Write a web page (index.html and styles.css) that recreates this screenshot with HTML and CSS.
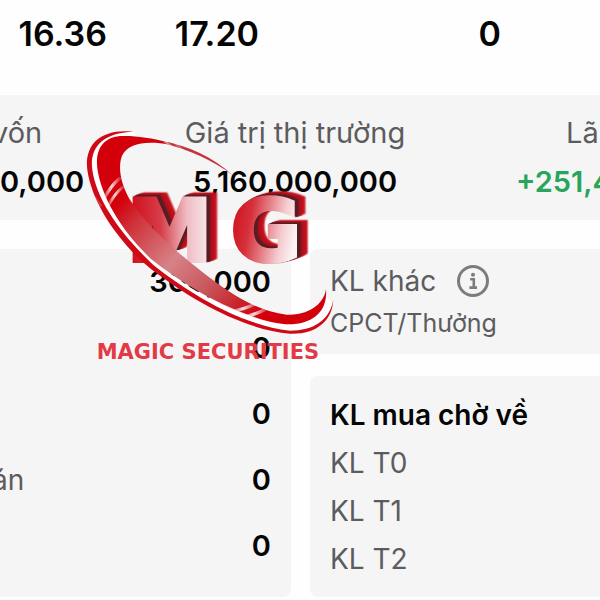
FILE: index.html
```html
<!DOCTYPE html>
<html lang="vi">
<head>
    <meta charset="UTF-8">
    <meta name="viewport" content="width=device-width, initial-scale=1.0">
    <title>Magic Securities</title>
    <link rel="stylesheet" href="styles.css">
</head>
<body>
    <main class="portfolio">
        <div class="prices">
            <span>16.36</span>
            <span>17.20</span>
            <span>0</span>
        </div>

        <dl class="summary">
            <div class="summary-item">
                <dt class="bleed">vốn</dt>
                <dd>0,000</dd>
            </div>
            <div class="summary-item center">
                <dt>Giá trị thị trường</dt>
                <dd>5,160,000,000</dd>
            </div>
            <div class="summary-item profit">
                <dt>Lã</dt>
                <dd>+251,4</dd>
            </div>
        </dl>

        <div class="details">
            <dl class="card volumes">
                <div class="row"><dt></dt><dd>300,000</dd></div>
                <div class="row"><dt></dt><dd>0</dd></div>
                <div class="row"><dt></dt><dd>0</dd></div>
                <div class="row"><dt class="bleed">án</dt><dd>0</dd></div>
                <div class="row"><dt></dt><dd>0</dd></div>
            </dl>

            <div class="column">
                <section class="card other">
                    <div class="other-title">
                        <span>KL khác</span>
                        <button class="info" type="button" aria-label="KL khác">
                            <svg viewBox="0 0 32 32" width="32" height="32">
                                <circle cx="16" cy="16" r="14.5" fill="none" stroke="#7c7c7e" stroke-width="3"/>
                                <circle cx="16" cy="9.7" r="2" fill="#7c7c7e"/>
                                <path d="M13.2 14.2h3.6v8M12.4 22.6h7.6" fill="none" stroke="#7c7c7e" stroke-width="2.6"/>
                            </svg>
                        </button>
                    </div>
                    <p class="note">CPCT/Thưởng</p>
                </section>

                <section class="card pending">
                    <h2>KL mua chờ về</h2>
                    <ul>
                        <li>KL T0</li>
                        <li>KL T1</li>
                        <li>KL T2</li>
                    </ul>
                </section>
            </div>
        </div>

        <!-- Watermark over the page -->
        <div class="watermark">
            <svg viewBox="0 0 810 750" width="270" height="250">
                <defs>
                    <linearGradient id="m" x1="0" x2="1" y1="0" y2="0">
                        <stop offset="0" stop-color="#cf0713"/>
                        <stop offset=".4" stop-color="#d63e49"/>
                        <stop offset=".7" stop-color="#efbcc2"/>
                        <stop offset="1" stop-color="#f7eef0"/>
                    </linearGradient>
                    <linearGradient id="g" x1="0" x2="1" y1="0" y2=".25">
                        <stop offset="0" stop-color="#cf0713"/>
                        <stop offset=".35" stop-color="#d5303b"/>
                        <stop offset=".8" stop-color="#f4cbd0"/>
                        <stop offset="1" stop-color="#fbf4f5"/>
                    </linearGradient>
                    <linearGradient id="band" gradientUnits="userSpaceOnUse" x1="100" y1="150" x2="640" y2="620">
                        <stop offset="0" stop-color="#d3000c"/>
                        <stop offset=".14" stop-color="#d3000c"/>
                        <stop offset=".24" stop-color="#cf3038"/>
                        <stop offset=".47" stop-color="#d68287"/>
                        <stop offset=".65" stop-color="#c9565c"/>
                        <stop offset=".8" stop-color="#c92128"/>
                        <stop offset=".9" stop-color="#d3000c"/>
                        <stop offset="1" stop-color="#d3000c"/>
                    </linearGradient>
                    <linearGradient id="shine">
                        <stop offset="0" stop-color="#fff" stop-opacity=".1"/>
                        <stop offset=".5" stop-color="#fff" stop-opacity=".85"/>
                        <stop offset="1" stop-color="#fff" stop-opacity=".2"/>
                    </linearGradient>
                </defs>

                <text class="letter" x="170" y="422" fill="url(#m)" stroke="url(#m)">M</text>
                <text class="letter" x="482" y="422" fill="url(#g)" stroke="url(#g)">G</text>

                <!-- white ring -->
                <path fill="#fff" d="M190 35C100 30 50 72 57 140C66 215 130 330 235 438C350 530 500 615 650 636C735 640 780 600 788 550L768 530C768 570 725 606 660 614C560 612 420 550 300 460C180 365 96 250 80 150C74 80 110 45 200 48Z"/>
                <!-- thin outer ring -->
                <path fill="#cf0a16" d="M190 35C90 24 42 76 52 150C66 250 145 365 240 445C370 545 520 628 660 641C735 644 786 606 790 540C778 602 730 632 660 632C520 616 370 530 250 435C150 340 80 240 67 150C58 85 95 38 190 35Z"/>
                <!-- main band -->
                <path fill="url(#band)" d="M300 68C240 52 190 46 150 48C95 54 76 92 82 145C94 230 152 330 242 416C360 510 520 596 640 612C720 618 774 580 768 508C760 562 700 588 650 584C560 574 480 520 400 458C310 390 220 305 178 236C150 185 144 140 156 107C176 68 230 62 300 74Z"/>
                <path fill="#c4343c" d="M280 64C355 78 430 112 488 166C430 121 360 91 280 70Z"/>
                <g fill="none" stroke="url(#shine)" stroke-linecap="round">
                    <path stroke-width="10" d="M100 238Q122 198 148 176"/>
                    <path stroke-width="9" d="M112 262Q132 222 158 202"/>
                    <path stroke-width="10" d="M482 574Q520 569 556 552"/>
                    <path stroke-width="10" d="M514 592Q550 586 588 568"/>
                    <path stroke-width="7" d="M76 232L92 256M284 62L304 80M318 72L336 88"/>
                </g>

                <text class="brand" x="80" y="717">MAGIC SECURITIES</text>
            </svg>
        </div>
    </main>
</body>
</html>
```

FILE: styles.css
```css
* {
    box-sizing: border-box;
}

body {
    margin: 0;
    background-color: #fefefe;
    color: #050505;
    font-family: Inter, 'Noto Sans', sans-serif;
    font-size: 28px;
    line-height: 32px;
    overflow: hidden;
}

dl, dd, ul, p, h2 {
    margin: 0;
    padding: 0;
}

.portfolio {
    position: relative;
}

.prices {
    display: grid;
    grid-template-columns: 107fr 152fr 242fr 99fr;
    padding: 16px 0 44px;
    font-size: 34px;
    line-height: 35px;
    font-weight: 600;
    text-align: right;
}

.summary {
    display: grid;
    grid-template-columns: minmax(0, 74fr) minmax(0, 442fr) minmax(0, 84fr);
    height: 125px;
    padding-top: 22px;
    background-color: #f5f5f5;
    font-size: 29px;
    white-space: nowrap;
}

.summary dt,
.volumes dt {
    color: #5c5c5e;
}

.summary dd {
    margin-top: 17px;
    font-weight: 600;
}

/* labels that run in from the left edge */
.bleed {
    margin-left: -8px;
}

.center {
    text-align: center;
}

.profit {
    overflow: hidden;
}

.profit dt {
    padding-left: 50px;
}

.profit dd {
    color: #27a55a;
}

.details {
    display: grid;
    grid-template-columns: 291fr 290fr;
    gap: 19px;
    margin-top: 29px;
}

.card {
    background-color: #f5f5f6;
}

.volumes {
    display: flex;
    flex-direction: column;
    gap: 34px;
    padding: 17px 20px 20px 0;
    border-radius: 0 8px 8px 0;
}

.row {
    display: flex;
    justify-content: space-between;
}

.row dd {
    font-size: 29px;
    font-weight: 600;
}

.column {
    display: flex;
    flex-direction: column;
    gap: 22px;
}

.other {
    padding: 16px 20px;
    border-radius: 8px 0 0 8px;
    color: #5c5c5e;
}

.other-title {
    display: flex;
    align-items: center;
    gap: 21px;
}

.info {
    display: flex;
    padding: 0;
    border: none;
    background: none;
}

.note {
    margin-top: 12px;
    font-size: 25px;
    line-height: 29px;
}

.pending {
    padding: 23px 20px 22px;
    border-radius: 8px 0 0 8px;
}

.pending h2 {
    font-size: 28px;
    font-weight: 600;
}

.pending ul {
    display: flex;
    flex-direction: column;
    gap: 16px;
    margin-top: 16px;
    list-style: none;
    color: #5c5c5e;
}

.watermark {
    position: absolute;
    top: 120px;
    left: 70px;
    pointer-events: none;
}

.watermark svg {
    display: block;
}

.letter {
    font-family: 'DejaVu Sans', sans-serif;
    font-size: 258px;
    font-weight: 700;
    stroke-width: 12px;
    filter: drop-shadow(4px -2px 0 #5a1c24) drop-shadow(8px -3px 0 #5a1c24) drop-shadow(9px -3px 0 #b30f1a) drop-shadow(11px -4px 0 #c4101c);
}

.brand {
    font-family: 'DejaVu Sans', sans-serif;
    font-size: 63px;
    font-weight: 700;
    fill: #e23a46;
}
```
